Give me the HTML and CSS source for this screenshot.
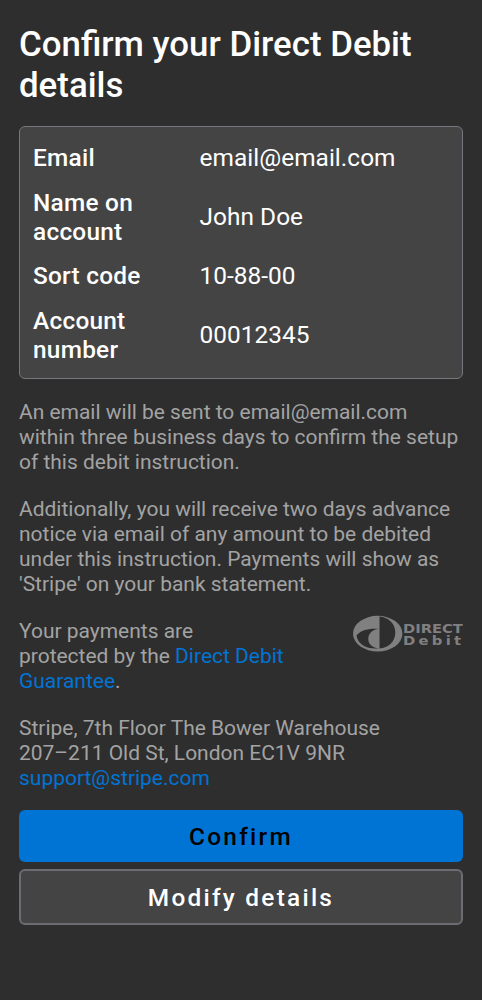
FILE: index.html
```html
<!DOCTYPE html>
<html lang="en">
<head>
<meta charset="utf-8">
<title>Confirm your Direct Debit details</title>
<link rel="stylesheet" href="styles.css">
</head>
<body>
<main class="sheet">
  <h1 class="title">Confirm your Direct Debit<br>details</h1>
  <dl class="card">
    <div class="row"><dt>Email</dt><dd>email@email.com</dd></div>
    <div class="row row-double"><dt>Name on<br>account</dt><dd>John Doe</dd></div>
    <div class="row"><dt>Sort code</dt><dd>10-88-00</dd></div>
    <div class="row row-double"><dt>Account<br>number</dt><dd>00012345</dd></div>
  </dl>
  <p class="text">An email will be sent to email@email.com<br>within three business days to confirm the setup<br>of this debit instruction.</p>
  <p class="text">Additionally, you will receive two days advance<br>notice via email of any amount to be debited<br>under this instruction. Payments will show as<br>'Stripe' on your bank statement.</p>
  <div class="guarantee">
    <p class="text">Your payments are<br>protected by the <a class="link">Direct Debit<br>Guarantee</a>.</p>
    <svg class="logo" width="112" height="38" viewBox="0 0 112 38" role="img" aria-label="Direct Debit">
      <ellipse cx="26.700" cy="18.700" rx="24.700" ry="17.900" fill="#808080"/>
      <path fill="#2e2e2e" d="M28.500 1.400C38 2.200 44.300 9 44.300 17.500C44.300 26.500 37.500 33 28.500 33.500Z"/>
      <path fill="#2e2e2e" d="M5.500 20.500C9 15.500 17 13 27.800 13.800C21 15 17.300 18.500 17.300 24C17.300 28.500 20.500 32.500 27.800 33.500C15.500 34.500 6.500 29 5.500 20.500Z"/>
      <text class="logo-top" transform="translate(52 18) scale(1.020 1)" textLength="58.600" lengthAdjust="spacingAndGlyphs">DIRECT</text>
      <text class="logo-bottom" transform="translate(52 29.800) scale(1.300 1)">Debit</text>
    </svg>
  </div>
  <p class="text">Stripe, 7th Floor The Bower Warehouse<br>207–211 Old St, London EC1V 9NR<br><a class="link">support@stripe.com</a></p>
  <div class="actions">
    <button class="button primary">Confirm</button>
    <button class="button secondary">Modify details</button>
  </div>
</main>
</body>
</html>
```
FILE: styles.css
```css
* { box-sizing: border-box; }
body { margin: 0; background: #2e2e2e; color: #fff; font-family: Roboto, sans-serif; }
.sheet { padding: 24px 19px 0; height: 1000px; }
.title { margin: 0 0 20px; font-size: 34.850px; line-height: 41px; font-weight: 500; white-space: nowrap; }
.card { margin: 0 0 21.400px; padding: 9px 13px; height: 252.600px; border: 1px solid #77777e; border-radius: 6px; background: #444; font-size: 24.400px; line-height: 28.600px; }
.row { display: flex; align-items: center; height: 45px; }
.row-double { height: 73px; }
.row dt { width: 166.500px; font-weight: 500; letter-spacing: .25px; }
.row dd { margin: 0; letter-spacing: .05px; }
.text { margin: 0 0 22px; font-size: 20.970px; line-height: 25px; color: #a3a3a3; white-space: nowrap; }
.link { color: #0074d4; }
.guarantee { display: flex; justify-content: space-between; }
.logo { margin: -4px 0 0; flex: none; }
.logo-top, .logo-bottom { font-family: "DejaVu Sans", sans-serif; font-weight: 700; fill: #808080; font-size: 12.800px; }
.logo-bottom { font-size: 11.400px; letter-spacing: 2.500px; }
.actions { display: flex; flex-direction: column; gap: 7px; margin-top: -3px; }
.button { width: 100%; padding: 2px 0 0; border-radius: 6px; font: 500 24.400px/28px Roboto, sans-serif; letter-spacing: 2.250px; }
.primary { height: 52px; border: 0; background: #0074d4; color: #000; }
.secondary { height: 56px; border: 2px solid #6c6c72; background: #444; color: #fff; }
```
